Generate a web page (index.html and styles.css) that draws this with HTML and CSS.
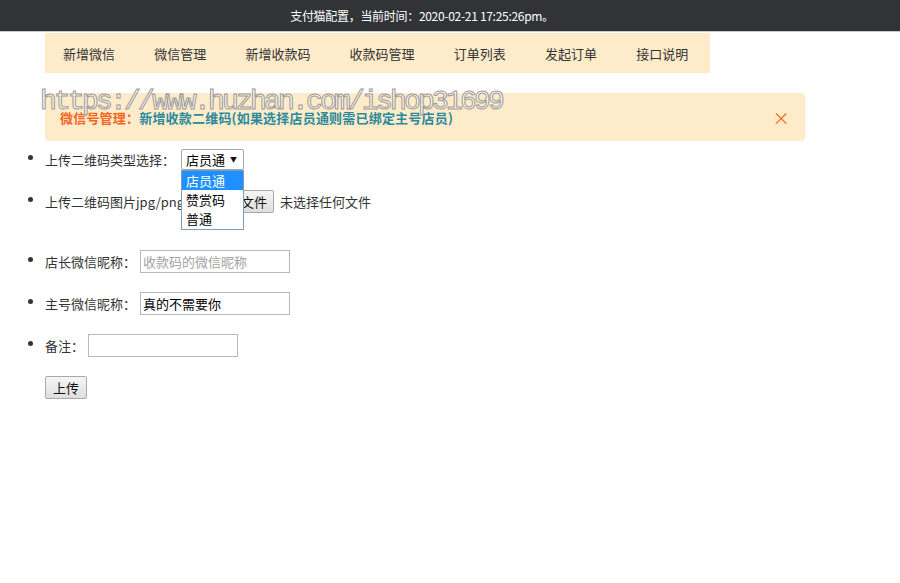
FILE: index.html
```html
<!DOCTYPE html>
<html lang="zh-CN">
<head>
<meta charset="utf-8">
<title>支付猫配置</title>
<link rel="stylesheet" href="styles.css">
</head>
<body>
<header class="topbar">支付猫配置，当前时间：2020-02-21 17:25:26pm。</header>
<nav class="nav">
  <a class="nav-item">新增微信</a>
  <a class="nav-item">微信管理</a>
  <a class="nav-item">新增收款码</a>
  <a class="nav-item">收款码管理</a>
  <a class="nav-item">订单列表</a>
  <a class="nav-item">发起订单</a>
  <a class="nav-item">接口说明</a>
</nav>
<div class="alert">
  <span class="alert-title">微信号管理：</span><span class="alert-text">新增收款二维码(如果选择店员通则需已绑定主号店员)</span>
  <span class="alert-close">&times;</span>
</div>
<ul class="form">
  <li class="row">
    <span class="label">上传二维码类型选择：</span>
    <span class="select-wrap">
      <span class="select">店员通<span class="caret">▼</span></span>
      <span class="dropdown">
        <span class="opt opt-sel">店员通</span>
        <span class="opt">赞赏码</span>
        <span class="opt">普通</span>
      </span>
    </span>
  </li>
  <li class="row row-file">
    <span class="label">上传二维码图片jpg/png：</span>
    <span class="btn btn-file">选择文件</span>
    <span class="nofile">未选择任何文件</span>
  </li>
  <li class="row">
    <span class="label">店长微信昵称：</span>
    <span class="input placeholder">收款码的微信昵称</span>
  </li>
  <li class="row">
    <span class="label">主号微信昵称：</span>
    <span class="input">真的不需要你</span>
  </li>
  <li class="row">
    <span class="label">备注：</span>
    <span class="input"></span>
  </li>
  <li class="row row-btn">
    <span class="btn btn-submit">上传</span>
  </li>
</ul>
<div class="watermark">https://www.huzhan.com/ishop31699</div>
</body>
</html>
```

FILE: styles.css
```css
html, body {
  margin: 0;
  padding: 0;
  background: #fff;
  font-family: "Noto Sans CJK SC", "Noto Sans", sans-serif;
  font-size: 13px;
  color: #333;
}
.topbar {
  height: 31px;
  background: #323336;
  border-bottom: 1px solid #c9c9c9;
  color: #fff;
  font-size: 12px;
  line-height: 31px;
  text-align: center;
  padding-right: 56px;
  letter-spacing: -0.3px;
}
.nav {
  display: flex;
  width: 665px;
  margin: 1px 0 0 45px;
  height: 40px;
  background: #fdebca;
  align-items: center;
}
.nav-item {
  padding: 0 19.6px;
  color: #333;
  font-size: 13px;
  white-space: nowrap;
}
.nav-item:first-child { padding-left: 18px; }
.alert {
  position: relative;
  display: flex;
  align-items: center;
  margin: 20px 0 0 45px;
  width: 760px;
  height: 48px;
  box-sizing: border-box;
  padding: 0 0 0 15px;
  background: #fdebca;
  border-radius: 4px;
  font-weight: bold;
  font-size: 13px;
  letter-spacing: 0.2px;
}
.alert-title { color: #f7641d; }
.alert-text { color: #2a8a9c; }
.alert-close {
  margin-left: auto;
  margin-right: 15px;
  color: #f26a1b;
  font-weight: normal;
  font-size: 17px;
  line-height: 1;
}
.form {
  margin: 7px 0 0 0;
  padding: 0 0 0 45px;
  list-style: disc;
}
.row {
  height: 23px;
  margin-bottom: 19px;
  position: relative;
  display: list-item;
}
.row > * { vertical-align: middle; }
.row-file { margin-bottom: 37px; }
.label { color: #333; }
.select-wrap {
  position: relative;
  display: inline-block;
  margin-left: 3px;
}
.select {
  display: inline-flex;
  align-items: center;
  box-sizing: border-box;
  width: 63px;
  height: 21px;
  padding: 0 0 0 4px;
  border: 1px solid #a6a6a6;
  border-radius: 2px;
  background: #fff;
  color: #000;
  font-size: 13px;
}
.caret {
  font-size: 7px;
  margin-left: 5px;
  color: #111;
}
.dropdown {
  position: absolute;
  left: 0;
  top: 21px;
  z-index: 5;
  display: flex;
  flex-direction: column;
  width: 63px;
  box-sizing: border-box;
  border: 1px solid #7f9db9;
  background: #fff;
  padding-bottom: 1px;
}
.opt {
  height: 19px;
  line-height: 19px;
  padding-left: 4px;
  color: #000;
  font-size: 13px;
}
.opt-sel { background: #1e90ff; color: #fff; }
.btn {
  display: inline-block;
  box-sizing: border-box;
  height: 23px;
  line-height: 21px;
  padding: 0 6px;
  border: 1px solid #a9a9a9;
  border-radius: 2px;
  background: linear-gradient(#f6f6f6, #dedede);
  color: #111;
  font-size: 13px;
}
.btn-file { margin-left: 8px; }
.nofile { margin-left: 3px; color: #333; }
.input {
  display: inline-block;
  box-sizing: border-box;
  width: 150px;
  height: 23px;
  line-height: 21px;
  padding: 0 2px;
  border: 1px solid #b9b9b9;
  background: #fff;
  color: #000;
  font-size: 13px;
  margin-left: 1px;
}
.placeholder { color: #a3a3a3; }
.row-btn { list-style: none; }
.btn-submit {
  width: 42px;
  padding: 0;
  text-align: center;
}
.watermark {
  position: absolute;
  left: 40px;
  top: 86px;
  font-family: "Liberation Mono", monospace;
  font-size: 28px;
  letter-spacing: -2.8px;
  color: rgba(255, 255, 255, 0.55);
  -webkit-text-stroke: 1px #9a9a9a;
  pointer-events: none;
  white-space: nowrap;
}
```
